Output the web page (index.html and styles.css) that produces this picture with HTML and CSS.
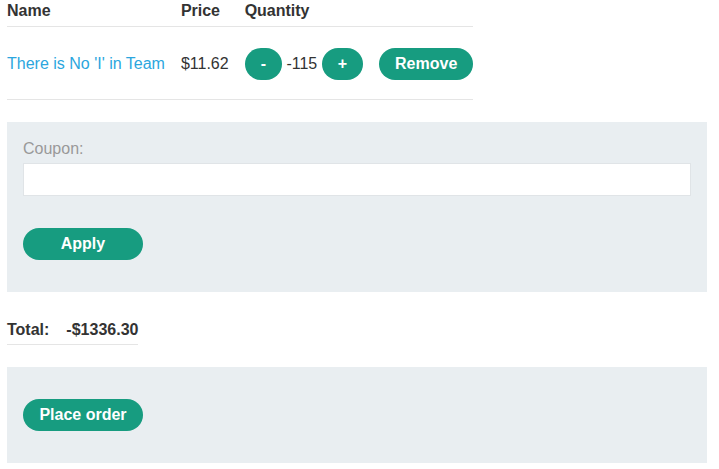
FILE: index.html
```html
<!DOCTYPE html>
<html>
<head>
<meta charset="utf-8">
<link rel="stylesheet" href="styles.css">
</head>
<body>
<div class="page">
  <table class="cart">
    <thead>
      <tr><th>Name</th><th>Price</th><th>Quantity</th><th></th></tr>
    </thead>
    <tbody>
      <tr>
        <td><a class="item-link" href="#">There is No 'I' in Team</a></td>
        <td>$11.62</td>
        <td class="qty"><button class="btn">-</button> <span class="qty-val">-115</span> <button class="btn">+</button></td>
        <td><button class="btn">Remove</button></td>
      </tr>
    </tbody>
  </table>

  <div class="panel coupon">
    <label class="coupon-label">Coupon:</label>
    <input class="coupon-input" type="text">
    <button class="btn btn-wide apply">Apply</button>
  </div>

  <table class="total">
    <tr><td>Total:</td><td>-$1336.30</td></tr>
  </table>

  <div class="panel order">
    <button class="btn btn-wide">Place order</button>
  </div>
</div>
</body>
</html>
```

FILE: styles.css
```css
* { box-sizing: border-box; }
body {
  margin: 0;
  font-family: "Liberation Sans", Arial, sans-serif;
  font-size: 16px;
  color: #333;
  background: #fff;
}
.page {
  padding: 0 7px;
  width: 714px;
}
.cart {
  border-collapse: collapse;
}
.cart th {
  text-align: left;
  font-weight: bold;
  line-height: 18px;
  padding: 2px 16px 6px 0;
  border-bottom: 1px solid #e5e5e5;
}
.cart td {
  height: 73px;
  padding: 1px 16px 0 0;
  line-height: 32px;
  vertical-align: middle;
  border-bottom: 1px solid #e5e5e5;
  white-space: nowrap;
}
.cart th:last-child, .cart td:last-child { padding-right: 0; }
.item-link {
  color: #2ba6de;
  text-decoration: none;
}
.qty-val {
  display: inline-block;
  vertical-align: middle;
  line-height: 32px;
}
.btn {
  display: inline-block;
  height: 32px;
  padding: 0 16px;
  border: none;
  border-radius: 16px;
  background: #179c80;
  color: #fff;
  font-family: "Liberation Sans", Arial, sans-serif;
  font-size: 16px;
  font-weight: bold;
  line-height: 32px;
  vertical-align: middle;
  cursor: pointer;
}
.btn-wide { width: 120px; padding: 0; }
.panel {
  background: #e9eef1;
  width: 700px;
}
.coupon {
  margin-top: 22px;
  padding: 18px 16px 32px;
}
.coupon-label {
  display: block;
  color: #999;
  line-height: 18px;
  margin-bottom: 5px;
}
.coupon-input {
  display: block;
  width: 100%;
  height: 33px;
  border: 1px solid #e0e4e7;
  background: #fff;
  margin: 0;
}
.apply {
  display: block;
  margin-top: 32px;
}
.total {
  margin-top: 29px;
  border-collapse: collapse;
}
.total td {
  font-weight: bold;
  line-height: 18px;
  padding: 0 17px 5px 0;
  border-bottom: 1px solid #e5e5e5;
}
.total td:last-child { padding-right: 0; }
.order {
  margin-top: 22px;
  padding: 32px 16px;
}
.order .btn { display: block; }
```
